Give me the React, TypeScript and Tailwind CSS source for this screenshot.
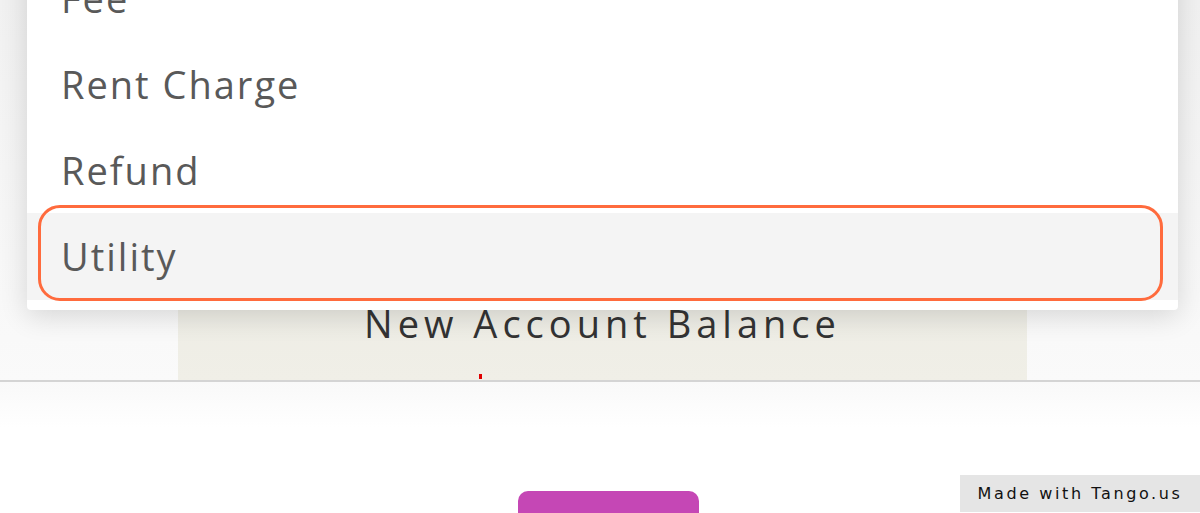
import React from 'react';

const items = ['Fee', 'Rent Charge', 'Refund', 'Utility'];

export default function App() {
  return (
    <div className="relative w-[1200px] h-[513px] overflow-hidden bg-white font-['Open_Sans',sans-serif]">
      {/* page behind the menu */}
      <div className="flex h-[382px] border-b-2 border-[#d4d4d4] bg-gradient-to-b from-[#f1f1f1] to-[#fafafa]">
        <div className="ml-[178px] w-[849px] h-full flex flex-col justify-end items-center pb-[38px] bg-gradient-to-b from-[#e4e4de] to-[#f0efe7]">
          <span className="text-[38px] leading-none tracking-[5px] text-[#333333]">New Account Balance</span>
        </div>
      </div>
      <div className="flex justify-center pl-[17px] h-[131px] bg-gradient-to-b from-[#f9f9f9] to-white to-[35%]">
        <div className="mt-[109px] w-[181px] h-[40px] rounded-[10px] bg-[#c547b5]" />
      </div>

      {/* little red mark */}
      <div className="absolute left-[479px] top-[374px] w-[3px] h-[5px] bg-[#e00000]" />

      {/* dropdown menu */}
      <div className="absolute left-[27px] top-[-45px] w-[1151px] pb-[10px] bg-white rounded-b-[4px] shadow-[0_6px_28px_rgba(0,0,0,0.14)]">
        {items.map((label, i) => (
          <div
            key={label}
            className={
              'h-[86px] flex items-center pl-[34px] text-[38px] tracking-[2px] text-[#595959] ' +
              (i === items.length - 1 ? 'bg-[#f4f4f4] h-[87px]' : '')
            }
          >
            {label}
          </div>
        ))}
      </div>

      {/* tango highlight */}
      <div className="absolute left-[38px] top-[205px] w-[1125px] h-[96px] rounded-[22px] border-[3px] border-[#ff6b3d]" />

      {/* badge */}
      <div className="absolute right-0 bottom-[1px] w-[240px] h-[37px] bg-[#e5e5e5] flex items-center justify-center font-['DejaVu_Sans',sans-serif] text-[16px] tracking-[2.6px] text-[#111]">
        Made with Tango.us
      </div>
    </div>
  );
}
